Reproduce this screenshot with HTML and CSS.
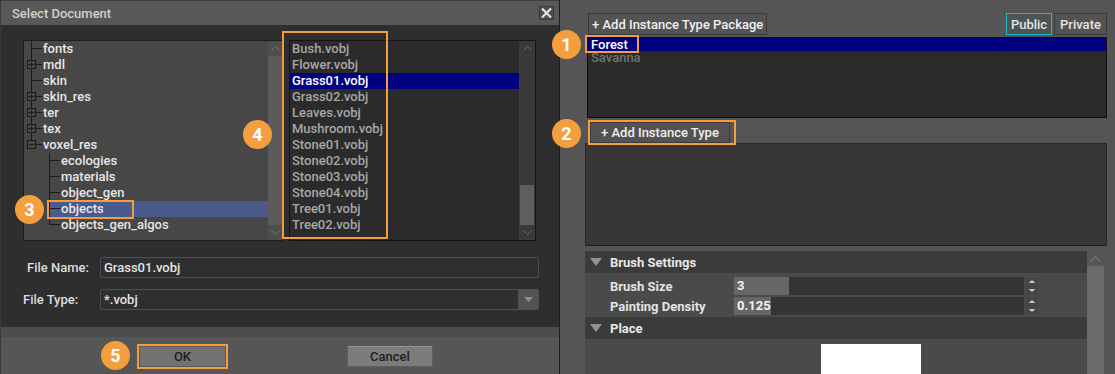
FILE: index.html
```html
<!DOCTYPE html>
<html lang="en">
<head>
	<meta charset="UTF-8">
	<title>Select Document</title>
	<link rel="stylesheet" href="styles.css">
</head>
<body>
<div class="screen">

	<section class="dialog">
		<header class="titlebar">
			<span>Select Document</span>
			<button class="close" type="button">
				<svg width="13" height="12" viewBox="0 0 13 12"><path d="M2 1.5 L11 10.5 M11 1.5 L2 10.5" stroke="#e2e2e2" stroke-width="2.2" fill="none"/></svg>
			</button>
		</header>

		<div class="dialog-body">
			<div class="browser">
				<div class="tree">
					<ul class="tree-list">
						<li class="node"><i class="guide tee"></i><span>fonts</span></li>
						<li class="node"><i class="guide tee"><b class="toggle plus"></b></i><span>mdl</span></li>
						<li class="node"><i class="guide tee"></i><span>skin</span></li>
						<li class="node"><i class="guide tee"><b class="toggle plus"></b></i><span>skin_res</span></li>
						<li class="node"><i class="guide tee"><b class="toggle plus"></b></i><span>ter</span></li>
						<li class="node"><i class="guide tee"><b class="toggle plus"></b></i><span>tex</span></li>
						<li class="node"><i class="guide ell"><b class="toggle"></b></i><span>voxel_res</span></li>
						<li class="node"><i class="guide"></i><i class="guide tee"></i><span>ecologies</span></li>
						<li class="node"><i class="guide"></i><i class="guide tee"></i><span>materials</span></li>
						<li class="node"><i class="guide"></i><i class="guide tee"></i><span>object_gen</span></li>
						<li class="node selected"><i class="guide"></i><i class="guide tee"></i><span>objects</span></li>
						<li class="node"><i class="guide"></i><i class="guide ell"></i><span>objects_gen_algos</span></li>
					</ul>
					<div class="vscroll tree-scroll">
						<div class="arrow"><svg width="9" height="5" viewBox="0 0 9 5"><path d="M0.5 4.5 L4.5 0.5 L8.5 4.5" stroke="#7c7c7c" fill="none"/></svg></div>
						<div class="track"><div class="thumb"></div></div>
						<div class="arrow"><svg width="9" height="5" viewBox="0 0 9 5"><path d="M0.5 0.5 L4.5 4.5 L8.5 0.5" stroke="#7c7c7c" fill="none"/></svg></div>
					</div>
				</div>

				<div class="files">
					<ul class="file-list">
						<li>Bush.vobj</li>
						<li>Flower.vobj</li>
						<li class="selected">Grass01.vobj</li>
						<li>Grass02.vobj</li>
						<li>Leaves.vobj</li>
						<li>Mushroom.vobj</li>
						<li>Stone01.vobj</li>
						<li>Stone02.vobj</li>
						<li>Stone03.vobj</li>
						<li>Stone04.vobj</li>
						<li>Tree01.vobj</li>
						<li>Tree02.vobj</li>
					</ul>
					<div class="vscroll file-scroll">
						<div class="arrow"><svg width="9" height="5" viewBox="0 0 9 5"><path d="M0.5 4.5 L4.5 0.5 L8.5 4.5" stroke="#6c6c6c" fill="none"/></svg></div>
						<div class="track"><div class="thumb"></div></div>
						<div class="arrow"><svg width="9" height="5" viewBox="0 0 9 5"><path d="M0.5 0.5 L4.5 4.5 L8.5 0.5" stroke="#6c6c6c" fill="none"/></svg></div>
					</div>
				</div>
			</div>

			<div class="form">
				<label class="name-label" for="file-name">File Name:</label>
				<input type="text" id="file-name" value="Grass01.vobj">
				<label class="type-label">File Type:</label>
				<div class="select">
					<span>*.vobj</span>
					<span class="drop"><svg width="9" height="5" viewBox="0 0 9 5"><path d="M0 0 H9 L4.5 5 Z" fill="#8c8c8c"/></svg></span>
				</div>
			</div>
		</div>

		<footer class="dialog-foot">
			<button type="button" class="btn ok">OK</button>
			<button type="button" class="btn">Cancel</button>
		</footer>
	</section>

	<section class="editor">
		<div class="toolbar">
			<button type="button" class="tool-btn pkg-btn">+ Add Instance Type Package</button>
			<div class="toggle-group">
				<button type="button" class="tool-btn active">Public</button>
				<button type="button" class="tool-btn">Private</button>
			</div>
		</div>

		<ul class="pkg-list">
			<li class="selected">Forest</li>
			<li>Savanna</li>
		</ul>

		<button type="button" class="tool-btn type-btn">+ Add Instance Type</button>
		<div class="type-box"></div>

		<div class="props">
			<div class="props-main">
				<div class="section-head">
					<svg width="12" height="8" viewBox="0 0 12 8"><path d="M0 0 H12 L6 8 Z" fill="#929292"/></svg>
					<span>Brush Settings</span>
				</div>
				<div class="prop-rows">
					<span class="prop-label">Brush Size</span>
					<span class="field" style="--fill: 55px">3</span>
					<span class="spin"><svg width="8" height="16" viewBox="0 0 8 16"><path d="M4 2 L7.5 5 H0.5 Z M4 14 L7.5 11 H0.5 Z" fill="#c4c4c4"/></svg></span>

					<span class="prop-label">Painting Density</span>
					<span class="field" style="--fill: 37px">0.125</span>
					<span class="spin"><svg width="8" height="16" viewBox="0 0 8 16"><path d="M4 2 L7.5 5 H0.5 Z M4 14 L7.5 11 H0.5 Z" fill="#c4c4c4"/></svg></span>
				</div>
				<div class="section-head">
					<svg width="12" height="8" viewBox="0 0 12 8"><path d="M0 0 H12 L6 8 Z" fill="#929292"/></svg>
					<span>Place</span>
				</div>
				<div class="place-body">
					<div class="preview"></div>
				</div>
			</div>
			<div class="vscroll props-scroll">
				<div class="arrow"><svg width="11" height="6" viewBox="0 0 11 6"><path d="M0.5 5.5 L5.5 0.5 L10.5 5.5" stroke="#8a8a8a" fill="none"/></svg></div>
				<div class="track"><div class="thumb"></div></div>
			</div>
		</div>
	</section>

	<!-- callouts -->
	<div class="mark" style="left: 585px; top: 35px; width: 54px; height: 18px;"></div>
	<div class="mark" style="left: 588px; top: 120px; width: 148px; height: 25px;"></div>
	<div class="mark" style="left: 47px; top: 200px; width: 87px; height: 19px;"></div>
	<div class="mark" style="left: 282px; top: 31px; width: 106px; height: 208px;"></div>
	<div class="mark" style="left: 137px; top: 344px; width: 91px; height: 25px;"></div>

	<div class="badge" style="left: 552px; top: 30px;">1</div>
	<div class="badge" style="left: 552px; top: 119px;">2</div>
	<div class="badge" style="left: 15px; top: 195px;">3</div>
	<div class="badge" style="left: 243px; top: 120px;">4</div>
	<div class="badge" style="left: 101px; top: 341px;">5</div>
</div>
</body>
</html>
```

FILE: styles.css
```css
* {
	box-sizing: border-box;
}

body {
	margin: 0;
	font-family: Roboto, "Noto Sans", sans-serif;
	font-size: 13px;
	font-weight: 500;
	background: #555;
}

ul {
	margin: 0;
	padding: 0;
	list-style: none;
}

button {
	font: inherit;
}

.screen {
	position: relative;
	display: flex;
	width: 1115px;
	height: 374px;
	overflow: hidden;
}

/* dialog */

.dialog {
	width: 560px;
	display: flex;
	flex-direction: column;
	background: #2e2e2e;
	border-left: 1px solid #3b3b3b;
	border-right: 1px solid #1c1c1c;
}

.titlebar {
	height: 25px;
	flex: none;
	display: flex;
	align-items: center;
	justify-content: space-between;
	padding: 0 5px 0 11px;
	background: #585858;
	border-top: 1px solid #3e3e3e;
	color: #cfcfcf;
}

.close {
	width: 15px;
	height: 14px;
	padding: 0;
	display: flex;
	align-items: center;
	justify-content: center;
	background: #4e4e4e;
	border: 1px solid #3a3a3a;
}

.dialog-body {
	flex: 1;
	padding: 15px 20px 17px 22px;
}

.browser {
	display: flex;
	gap: 6px;
	height: 201px;
}

.tree {
	width: 260px;
	display: flex;
	background: #474747;
	border: 1px solid #1d1d1d;
}

.tree-list {
	flex: 1;
	overflow: hidden;
	color: #e6e6e6;
}

.node {
	display: flex;
	height: 16px;
	line-height: 16px;
	white-space: nowrap;
}

.node span {
	padding-left: 1px;
}

.node.selected {
	background: linear-gradient(to right, transparent 24px, #4b5a8c 24px);
}

.guide {
	position: relative;
	flex: none;
	width: 18px;
	height: 16px;
}

.tee::before,
.ell::before {
	content: "";
	position: absolute;
	left: 7px;
	top: 0;
	width: 1px;
	height: 16px;
	background: #1b1b1b;
}

.ell::before {
	height: 8px;
}

.tee::after,
.ell::after {
	content: "";
	position: absolute;
	left: 7px;
	right: 0;
	top: 7px;
	height: 1px;
	background: #1b1b1b;
}

.toggle {
	position: absolute;
	left: 3px;
	top: 3px;
	width: 9px;
	height: 9px;
	z-index: 1;
	background: #474747;
	border: 1px solid #1b1b1b;
}

.toggle::before {
	content: "";
	position: absolute;
	left: 1px;
	right: 1px;
	top: 3px;
	height: 1px;
	background: #1b1b1b;
}

.plus::after {
	content: "";
	position: absolute;
	top: 1px;
	bottom: 1px;
	left: 3px;
	width: 1px;
	background: #1b1b1b;
}

.vscroll {
	display: flex;
	flex-direction: column;
}

.vscroll .arrow {
	height: 15px;
	flex: none;
	display: flex;
	align-items: center;
	justify-content: center;
}

.vscroll .track {
	flex: 1;
	display: flex;
	flex-direction: column;
}

.tree-scroll {
	width: 14px;
	background: #4e4e4e;
}

.tree-scroll .thumb {
	flex: 1;
	background: #5b5b5b;
}

.files {
	width: 247px;
	display: flex;
	background: #2b2b2b;
	border: 1px solid #141414;
}

.file-list {
	flex: 1;
	color: #a6a6a6;
}

.file-list li {
	height: 16px;
	line-height: 16px;
	padding-left: 2px;
}

.file-list .selected,
.pkg-list .selected {
	background: #000080;
	color: #fff;
}

.file-scroll {
	width: 16px;
	background: #3a3a3a;
}

.file-scroll .track {
	justify-content: flex-end;
}

.file-scroll .thumb {
	height: 40px;
	margin: 0 1px;
	background: #5e5e5e;
}

.form {
	margin-top: 16px;
	display: grid;
	grid-template-columns: 77px 1fr;
	row-gap: 11px;
	align-items: center;
	color: #dcdcdc;
}

.name-label {
	padding-left: 4px;
}

input[type="text"],
.select {
	height: 21px;
	padding: 0 0 0 3px;
	background: #2f2f2f;
	border: 1px solid #4f4f4f;
	border-radius: 2px;
	color: #e2e2e2;
	font: inherit;
}

.select {
	display: flex;
	align-items: center;
	justify-content: space-between;
}

.drop {
	width: 20px;
	height: 100%;
	display: flex;
	align-items: center;
	justify-content: center;
	background: #525252;
}

.dialog-foot {
	height: 47px;
	flex: none;
	display: flex;
	align-items: flex-start;
	gap: 121px;
	padding: 19px 0 0 138px;
	background: linear-gradient(#4d4d4d 10px, #565656 10px);
}

.btn {
	width: 86px;
	height: 21px;
	padding: 0;
	background: #7c7c7c;
	border: 1px solid #5e5e5e;
	border-top-color: #959595;
	border-radius: 2px;
	color: #1e1e1e;
}

.btn.ok {
	width: 87px;
	background: #727272;
	border-color: #5a5a5a;
}

/* editor side */

.editor {
	flex: 1;
	display: flex;
	flex-direction: column;
	align-items: flex-start;
	padding: 13px 8px 0 25px;
	background: #555;
}

.editor > * {
	flex-shrink: 0;
}

.toolbar {
	align-self: stretch;
	display: flex;
	justify-content: space-between;
	height: 22px;
}

.tool-btn {
	height: 22px;
	padding: 0 3px;
	background: #535353;
	border: 1px solid #3a3a3a;
	color: #f0f0f0;
}

.pkg-btn {
	margin-left: 3px;
}

.toggle-group {
	display: flex;
	gap: 2px;
}

.toggle-group .tool-btn {
	width: 53px;
	color: #e4e4e4;
}

.toggle-group .active {
	width: 46px;
	background: #4a5555;
	border-color: #22b5c2;
}

.pkg-list {
	align-self: stretch;
	height: 81px;
	margin: 2px 0 0 2px;
	background: #2a2a2a;
	border: 1px solid #0e0e0e;
	color: #727272;
}

.pkg-list li {
	height: 13px;
	line-height: 13px;
	padding-left: 3px;
}

.type-btn {
	height: 21px;
	margin: 4px 0 0 5px;
	padding: 0 10px;
}

.type-box {
	align-self: stretch;
	height: 103px;
	background: #373737;
	border: 1px solid #282828;
	border-bottom-color: #1f1f1f;
}

.props {
	align-self: stretch;
	flex: 1 1 0;
	min-height: 0;
	overflow: hidden;
	display: flex;
	margin: 5px 3px 0 0;
}

.props-main {
	flex: 1;
	background: #4a4a4a;
}

.section-head {
	height: 22px;
	display: flex;
	align-items: center;
	gap: 8px;
	padding-left: 5px;
	background: #3b3b3b;
	color: #e8e8e8;
	font-weight: 700;
}

.prop-rows {
	display: grid;
	grid-template-columns: 124px 290px 16px;
	grid-auto-rows: 18px;
	row-gap: 2px;
	align-items: center;
	padding: 4px 0 2px 25px;
	color: #e4e4e4;
	font-weight: 700;
}

.field {
	height: 18px;
	line-height: 18px;
	padding-left: 3px;
	background: linear-gradient(to right, #666 var(--fill), #353535 var(--fill));
	color: #f2f2f2;
}

.spin {
	display: flex;
	justify-content: center;
	width: 12px;
	margin-left: 2px;
	background: #444;
}

.place-body {
	height: 40px;
	padding: 5px 0 0 236px;
}

.preview {
	width: 100px;
	height: 40px;
	background: #fff;
}

.props-scroll {
	width: 17px;
	background: #6a6a6a;
}

.props-scroll .arrow {
	background: #555;
}

/* callouts */

.mark {
	position: absolute;
	border: 2px solid #f49d3f;
}

.badge {
	position: absolute;
	width: 29px;
	height: 29px;
	border-radius: 50%;
	background: #f59e3f;
	color: #fff;
	font-size: 18px;
	font-weight: 700;
	line-height: 29px;
	text-align: center;
}
```
